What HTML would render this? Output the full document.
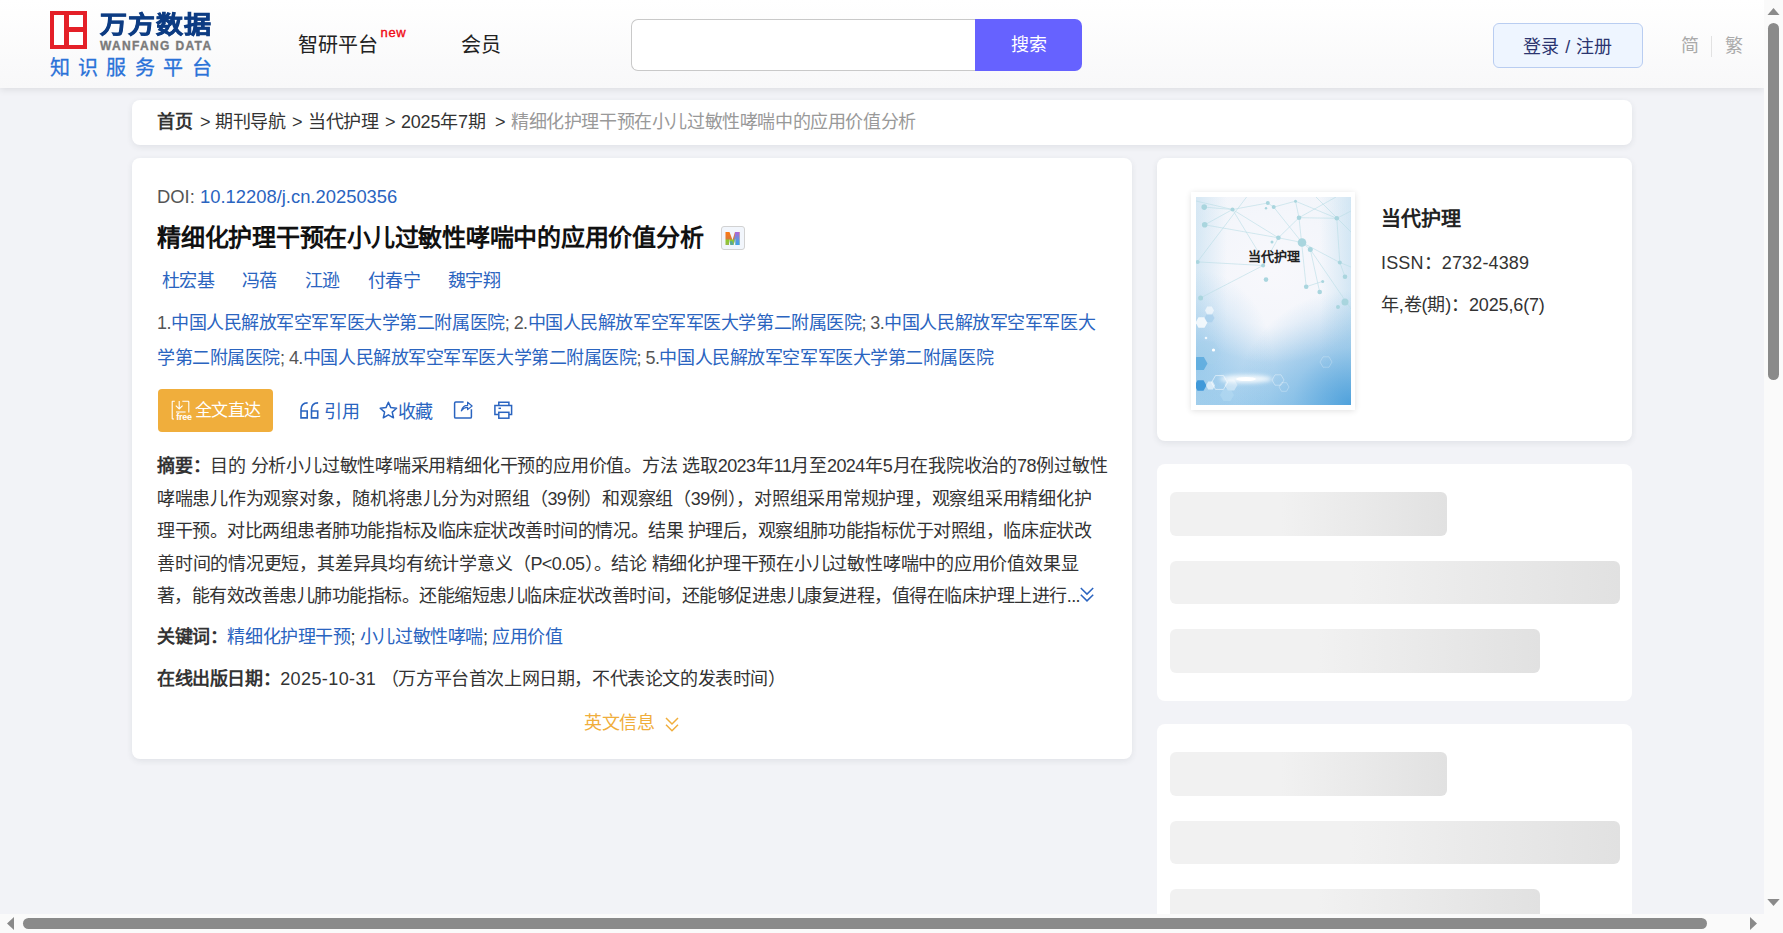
<!DOCTYPE html>
<html lang="zh-CN"><head><meta charset="utf-8"><title>万方数据</title>
<style>
*{margin:0;padding:0;box-sizing:border-box}
html,body{width:1783px;height:933px;overflow:hidden}
body{background:#f2f3f7;font-family:"Liberation Sans",sans-serif;color:#333;position:relative}
.abs{position:absolute}
.nw{white-space:nowrap}
#hdr{position:absolute;left:0;top:0;width:1764px;height:88px;background:linear-gradient(#ffffff,#f8f8f9);box-shadow:0 2px 7px rgba(0,0,0,.09)}
.card{position:absolute;background:#fff;border-radius:8px}
.shd{box-shadow:0 2px 6px rgba(40,50,70,.09)}
.blue{color:#2a64c0}
.t176{font-size:18px;letter-spacing:-0.4px}
.sk{position:absolute;border-radius:6px;background:linear-gradient(90deg,#f1f1f1 0%,#f1f1f1 40%,#e1e1e1 100%)}
svg{position:absolute;overflow:visible}
.jl{white-space:nowrap;text-align:justify;text-align-last:justify}
</style></head>
<body>
<div id="hdr">
  <div class="abs" style="left:50px;top:11px;width:37px;height:38px;border:4.5px solid #e42028;background:#fff"></div>
  <div class="abs" style="left:64px;top:11px;width:5px;height:38px;background:#e42028"></div>
  <div class="abs" style="left:64px;top:27px;width:23px;height:5px;background:#e42028"></div>
  <div class="abs nw jl" style="left:100px;top:7.5px;font-size:27px;line-height:32px;font-weight:900;color:#0d3c83;letter-spacing:1px;-webkit-text-stroke:0.8px #0d3c83;transform:scaleY(0.9);transform-origin:0 29px;width:112px">万方数据</div>
  <div class="abs nw" style="left:100px;top:38.5px;font-size:12px;line-height:15px;font-weight:bold;color:#7a7a7a;letter-spacing:1.35px;-webkit-text-stroke:0.35px #7a7a7a">WANFANG DATA</div>
  <div class="abs nw jl" style="left:49.5px;top:55px;font-size:20px;line-height:26px;color:#2a72d8;letter-spacing:8.45px;-webkit-text-stroke:0.3px #2a72d8;width:170.7px">知识服务平台</div>

  <div class="abs nw jl" style="left:298px;top:31px;font-size:20px;line-height:28px;color:#222;width:80px">智研平台</div>
  <div class="abs nw" style="left:380.5px;top:25px;font-size:13px;letter-spacing:0.7px;line-height:16px;color:#f00a14;-webkit-text-stroke:0.35px #f00a14">new</div>
  <div class="abs nw jl" style="left:461px;top:31px;font-size:20px;line-height:28px;color:#222;width:40px">会员</div>

  <div class="abs" style="left:631px;top:19px;width:346px;height:52px;border:1px solid #c9c9c9;border-right:none;border-radius:7px 0 0 7px;background:#fff"></div>
  <div class="abs nw" style="left:975px;top:19px;width:107px;height:52px;border-radius:0 7px 7px 0;background:#6662ff;color:#fff;font-size:18px;line-height:52px;text-align:center">搜索</div>

  <div class="abs nw" style="left:1493px;top:23px;width:150px;height:45px;border:1px solid #b9cdf1;border-radius:6px;background:#eef5ff;color:#2c3570;font-size:18px;letter-spacing:0.4px;line-height:47px;text-align:center">登录 / 注册</div>
  <div class="abs nw" style="left:1681px;top:34px;font-size:18px;line-height:24px;color:#aaa">简</div>
  <div class="abs" style="left:1711px;top:36px;width:1px;height:21px;background:#e2e2e2"></div>
  <div class="abs nw" style="left:1725px;top:34px;font-size:18px;line-height:24px;color:#aaa">繁</div>
</div>

<!-- breadcrumb -->
<div class="card shd" style="left:132px;top:100px;width:1500px;height:45px">
  <div class="abs nw t176 jl" style="left:25px;top:10px;line-height:25px;color:#333;font-weight:bold;width:35.2px">首页</div>
  <div class="abs nw t176" style="left:68px;top:10px;line-height:25px;color:#333">&gt;</div>
  <div class="abs nw t176 jl" style="left:83px;top:10px;line-height:25px;color:#333;width:70.4px">期刊导航</div>
  <div class="abs nw t176" style="left:160px;top:10px;line-height:25px;color:#333">&gt;</div>
  <div class="abs nw t176 jl" style="left:176px;top:10px;line-height:25px;color:#333;width:70.4px">当代护理</div>
  <div class="abs nw t176" style="left:253px;top:10px;line-height:25px;color:#333">&gt;</div>
  <div class="abs nw t176 jl" style="left:269px;top:10px;line-height:25px;color:#333;letter-spacing:-0.2px;width:84.7px">2025年7期</div>
  <div class="abs nw t176" style="left:363px;top:10px;line-height:25px;color:#333">&gt;</div>
  <div class="abs nw t176 jl" style="left:379px;top:10px;line-height:25px;color:#999;width:404.8px">精细化护理干预在小儿过敏性哮喘中的应用价值分析</div>
</div>

<!-- main card -->
<div class="card shd" style="left:132px;top:158px;width:1000px;height:601px">
  <div class="abs nw" style="left:25px;top:26px;font-size:18.4px;line-height:26px;color:#555">DOI: <span class="blue">10.12208/j.cn.20250356</span></div>
  <div class="abs nw jl" style="left:25px;top:64px;font-size:24px;letter-spacing:-0.25px;line-height:32px;font-weight:bold;color:#111;width:546.3px">精细化护理干预在小儿过敏性哮喘中的应用价值分析</div>
  <div class="abs" style="left:589px;top:68px;width:24px;height:24px;border:1.5px solid #d2d2d2;border-radius:3px;background:#f2f6fc"></div>
  <svg style="left:593px;top:74px" width="15" height="13" viewBox="0 0 15 13">
    <defs>
      <linearGradient id="mg1" x1="0" y1="0" x2="0" y2="1"><stop offset="0" stop-color="#ff7a10"/><stop offset="0.55" stop-color="#d9783a"/><stop offset="0.6" stop-color="#8ccc2a"/><stop offset="1" stop-color="#9ab84a"/></linearGradient>
      <linearGradient id="mg2" x1="0" y1="0" x2="0" y2="1"><stop offset="0" stop-color="#b063d6"/><stop offset="0.5" stop-color="#6a8fe0"/><stop offset="1" stop-color="#3aa0ea"/></linearGradient>
    </defs>
    <path d="M0.5 0 H4.5 L7.5 8 L10 0 H14.5 V13 H10.5 V6 L8.5 13 H5.5 L4 7 V13 H0.5 Z" fill="url(#mg1)"/>
    <path d="M10 0 H14.5 V13 H10.5 V6 L8.8 12 Z" fill="url(#mg2)"/>
    <path d="M5.5 13 L4.6 9.5 L7.2 9 L8.6 13 Z" fill="#5aa898"/>
  </svg>

  <div class="abs nw t176 blue jl" style="left:29.5px;top:110px;line-height:26px;width:52.8px">杜宏基</div>
  <div class="abs nw t176 blue jl" style="left:109.5px;top:110px;line-height:26px;width:35.2px">冯蓓</div>
  <div class="abs nw t176 blue jl" style="left:172.5px;top:110px;line-height:26px;width:35.2px">江逊</div>
  <div class="abs nw t176 blue jl" style="left:235.5px;top:110px;line-height:26px;width:52.8px">付春宁</div>
  <div class="abs nw t176 blue jl" style="left:315.5px;top:110px;line-height:26px;width:52.8px">魏宇翔</div>

  <div class="abs" style="left:25px;top:148px;line-height:35px;color:#555;font-size:18px;letter-spacing:-0.6px">
    <div class="jl" style="width:938px">1.<span class="blue">中国人民解放军空军军医大学第二附属医院</span>; 2.<span class="blue">中国人民解放军空军军医大学第二附属医院</span>; 3.<span class="blue">中国人民解放军空军军医大</span></div>
    <div class="jl" style="width:836px"><span class="blue">学第二附属医院</span>; 4.<span class="blue">中国人民解放军空军军医大学第二附属医院</span>; 5.<span class="blue">中国人民解放军空军军医大学第二附属医院</span></div>
  </div>

  <div class="abs" style="left:26px;top:231px;width:115px;height:43px;border-radius:4px;background:#f0ae3c"></div>
  <svg style="left:38.6px;top:241.6px" width="24" height="22" viewBox="0 0 24 22">
    <path d="M3.8 1.3 H1.6 Q1.2 1.3 1.2 1.7 V18.6 Q1.2 19 1.6 19 H3" fill="none" stroke="#fff" stroke-width="1.1"/>
    <path d="M11.3 1.3 H17.4 Q17.8 1.3 17.8 1.7 V12.5" fill="none" stroke="#fff" stroke-width="1.1"/>
    <path d="M8.2 1 V9 M4.8 5.6 L8.2 9 L11.6 5.6" fill="none" stroke="#fff" stroke-width="1.1"/>
    <path d="M5 12 H14.6" fill="none" stroke="#fff" stroke-width="1.1"/>
    <text x="5.3" y="20.2" font-family="Liberation Sans" font-size="9" font-weight="bold" fill="#fff" letter-spacing="-0.3">free</text>
  </svg>
  <div class="abs nw jl" style="left:62.5px;top:240px;font-size:17px;letter-spacing:-0.5px;line-height:26px;color:#fff;width:66px">全文直达</div>

  <svg style="left:167px;top:243px" width="20" height="18" viewBox="0 0 20 18">
    <path d="M8.6 1.9 Q2 1.9 2 8.6 V16.9 H8.2 V10 H2" fill="none" stroke="#2a64c0" stroke-width="1.6"/>
    <path d="M19.1 1.9 Q12.5 1.9 12.5 8.6 V16.9 H18.7 V10 H12.5" fill="none" stroke="#2a64c0" stroke-width="1.6"/>
  </svg>
  <div class="abs nw t176 blue jl" style="left:192px;top:240.5px;line-height:26px;width:35.2px">引用</div>

  <svg style="left:246.8px;top:243px" width="20" height="19" viewBox="0 0 20 19">
    <path d="M9.4 1.2 L11.8 6.6 L17.6 7.2 L13.2 11.1 L14.5 16.8 L9.4 13.8 L4.3 16.8 L5.6 11.1 L1.2 7.2 L7 6.6 Z" fill="none" stroke="#2a64c0" stroke-width="1.5" stroke-linejoin="round"/>
  </svg>
  <div class="abs nw t176 blue jl" style="left:265.5px;top:240.5px;line-height:26px;width:35.2px">收藏</div>

  <svg style="left:321px;top:243.2px" width="20" height="18" viewBox="0 0 20 18">
    <path d="M10.6 1.1 H2.8 Q1.6 1.1 1.6 2.3 V15.9 Q1.6 17.1 2.8 17.1 H17.2 Q18.4 17.1 18.4 15.9 V8.2" fill="none" stroke="#2a64c0" stroke-width="1.5"/>
    <path d="M8.3 9.8 Q10 4.2 14.6 4.4 V1.2 L19.1 5 L14.6 8.6 V6.3 Q11 6.1 8.3 9.8 Z" fill="none" stroke="#2a64c0" stroke-width="1.2" stroke-linejoin="round"/>
  </svg>

  <svg style="left:361px;top:243.2px" width="20" height="18" viewBox="0 0 20 18">
    <path d="M5.8 4.7 V1.3 H15.9 V4.7" fill="none" stroke="#2a64c0" stroke-width="1.5"/>
    <path d="M5.2 13.4 H1.9 V4.6 H18.6 V13.4 H15.9" fill="none" stroke="#2a64c0" stroke-width="1.5"/>
    <rect x="5.8" y="11.3" width="10.1" height="5.9" fill="none" stroke="#2a64c0" stroke-width="1.5"/>
    <path d="M5.5 7.3 H8" stroke="#2a64c0" stroke-width="1.5"/>
  </svg>

  <div class="abs" style="left:25px;top:292px;line-height:32.5px;color:#333;font-size:18px;letter-spacing:-0.6px">
    <div class="jl" style="width:950px"><b>摘要：</b>目的 分析小儿过敏性哮喘采用精细化干预的应用价值。方法 选取2023年11月至2024年5月在我院收治的78例过敏性</div>
    <div class="jl" style="width:934px">哮喘患儿作为观察对象，随机将患儿分为对照组（39例）和观察组（39例），对照组采用常规护理，观察组采用精细化护</div>
    <div class="jl" style="width:934px">理干预。对比两组患者肺功能指标及临床症状改善时间的情况。结果 护理后，观察组肺功能指标优于对照组，临床症状改</div>
    <div class="jl" style="width:921px">善时间的情况更短，其差异具均有统计学意义（P&lt;0.05）。结论 精细化护理干预在小儿过敏性哮喘中的应用价值效果显</div>
    <div class="jl" style="width:923px">著，能有效改善患儿肺功能指标。还能缩短患儿临床症状改善时间，还能够促进患儿康复进程，值得在临床护理上进行...</div>
  </div>
  <svg style="left:948px;top:429px" width="15" height="15" viewBox="0 0 15 15">
    <path d="M0.8 1 L7 7.1 L13.2 1 M0.8 7.8 L7 13.9 L13.2 7.8" fill="none" stroke="#2a64c0" stroke-width="1.5"/>
  </svg>

  <div class="abs nw t176 jl" style="left:25px;top:465.5px;line-height:26px;color:#333;width:405.6px"><b>关键词：</b><span class="blue">精细化护理干预</span>; <span class="blue">小儿过敏性哮喘</span>; <span class="blue">应用价值</span></div>
  <div class="abs jl" style="left:25px;top:507.5px;width:618px;font-size:18px;letter-spacing:-0.4px;line-height:26px;color:#333"><b>在线出版日期：</b><span style="letter-spacing:0.4px">2025-10-31</span> （万方平台首次上网日期，不代表论文的发表时间）</div>
  <div class="abs nw t176 jl" style="left:452px;top:551.5px;line-height:26px;color:#f0ae3c;width:70.4px">英文信息</div>
  <svg style="left:533px;top:559px" width="15" height="15" viewBox="0 0 15 15">
    <path d="M1 1 L7 7 L13 1 M1 7.8 L7 13.8 L13 7.8" fill="none" stroke="#f0ae3c" stroke-width="1.5"/>
  </svg>
</div>

<!-- right card 1 -->
<div class="card shd" style="left:1157px;top:158px;width:475px;height:283px">
  <div class="abs" style="left:34px;top:34px;width:164px;height:218px;background:#fff;box-shadow:0 1px 6px rgba(0,0,0,.12)"></div>
  <div class="abs" style="left:39px;top:39px;width:155px;height:208px;overflow:hidden;background:radial-gradient(ellipse 75% 55% at 100% 100%,rgba(62,152,216,0.85) 0%,rgba(62,152,216,0.3) 50%,rgba(62,152,216,0) 100%),radial-gradient(ellipse 50% 45% at 0% 80%,rgba(120,185,230,0.5) 0%,rgba(120,185,230,0) 100%),linear-gradient(90deg,rgba(185,218,238,0.5) 0%,rgba(185,218,238,0) 20%,rgba(185,218,238,0) 80%,rgba(185,218,238,0.55) 100%),radial-gradient(ellipse 70% 45% at 50% 35%,#f8f8fc 0%,#f4f6fb 60%,rgba(244,246,251,0) 100%),linear-gradient(180deg,#f2f5fa 0%,#eef3f9 45%,#dde9f5 62%,#c4def2 80%,#a9d2ee 100%)">
    <svg style="left:0;top:0" width="155" height="208" viewBox="0 0 155 208">
      <g stroke="#b9dde5" stroke-width="0.7" fill="none" opacity="0.85">
        <path d="M0 4 L36.5 12.5 L71.8 6 L77.7 10.1 L99.5 4.2 L140.8 21.3 L155 14"/>
        <path d="M8.2 10.1 L36.5 12.5 L82.4 40.8 L106 45.5 L143.8 65.5 L155 70"/>
        <path d="M36.5 12.5 L8.7 27.8 L82.4 40.8"/>
        <path d="M36.5 12.5 L64.8 59"/>
        <path d="M77.7 10.1 L106 45.5 L114.3 52.5 L155 112"/>
        <path d="M140 0 L103 20.7 L82.4 40.8 L67.1 68.5 L4.6 100.9"/>
        <path d="M99.5 4.2 L103 20.7 L140.8 21.3 M103 20.7 L110.2 89.7 L126.7 84.4"/>
        <path d="M1.7 64.9 L67.1 68.5"/>
        <path d="M2.3 63.7 L50.6 0"/>
        <path d="M114.3 52.5 L123.7 95 M140.8 21.3 L143.8 65.5 L149 79.7"/>
        <path d="M120 0 L155 35"/>
      </g>
      <g fill="#a9d5de">
        <circle cx="8.2" cy="10.1" r="2.8"/><circle cx="8.7" cy="27.8" r="2.8"/><circle cx="36.5" cy="12.5" r="2"/>
        <circle cx="71.8" cy="6" r="2"/><circle cx="77.7" cy="10.1" r="2"/><circle cx="70" cy="11.3" r="1.2"/>
        <circle cx="99.5" cy="4.2" r="1.5"/><circle cx="103" cy="20.7" r="2.3"/><circle cx="140.8" cy="21.3" r="2.3"/>
        <circle cx="82.4" cy="40.8" r="2.3"/><circle cx="76" cy="44.9" r="1.5"/><circle cx="106" cy="45.5" r="4.3"/>
        <circle cx="114.3" cy="52.5" r="2.5"/><circle cx="143.8" cy="65.5" r="2"/><circle cx="67.1" cy="68.5" r="2"/>
        <circle cx="70" cy="82.6" r="2.3"/><circle cx="1.7" cy="64.9" r="2"/><circle cx="110.2" cy="89.7" r="2.3"/>
        <circle cx="126.7" cy="84.4" r="1.5"/><circle cx="123.7" cy="95" r="2.3"/><circle cx="149" cy="79.7" r="2.3"/>
        <circle cx="4.6" cy="100.9" r="2.5"/><circle cx="149" cy="105" r="3.5"/><circle cx="142" cy="110" r="2"/>
      </g>
      <g>
        <path d="M25.0 156.0 L18.5 167.3 L5.5 167.3 L-1.0 156.0 L5.5 144.7 L18.5 144.7 Z" fill="#a8d0ec" opacity="0.35"/>
        <path d="M11.5 166.5 L7.8 173.0 L0.3 173.0 L-3.5 166.5 L0.2 160.0 L7.8 160.0 Z" fill="#4aa3dc" opacity="0.7"/>
        <path d="M10.5 188.5 L7.5 193.7 L1.5 193.7 L-1.5 188.5 L1.5 183.3 L7.5 183.3 Z" fill="#2f8fd6" opacity="0.85"/>
        <path d="M11.5 125.5 L8.5 130.7 L2.5 130.7 L-0.5 125.5 L2.5 120.3 L8.5 120.3 Z" fill="#ffffff" opacity="0.8"/>
        <path d="M18.5 121.0 L16.0 125.3 L11.0 125.3 L8.5 121.0 L11.0 116.7 L16.0 116.7 Z" fill="#9cc9ea" opacity="0.55"/>
        <path d="M18.0 113.5 L15.8 117.4 L11.2 117.4 L9.0 113.5 L11.2 109.6 L15.8 109.6 Z" fill="#ffffff" opacity="0.6"/>
        <path d="M19.0 188.5 L16.8 192.4 L12.2 192.4 L10.0 188.5 L12.2 184.6 L16.8 184.6 Z" fill="#ffffff" opacity="0.6"/>
        <path d="M31.5 185.5 L27.5 192.4 L19.5 192.4 L15.5 185.5 L19.5 178.6 L27.5 178.6 Z" fill="none" stroke="#ffffff" stroke-width="0.8" opacity="0.7"/>
        <path d="M41.5 188.0 L38.2 193.6 L31.8 193.6 L28.5 188.0 L31.7 182.4 L38.2 182.4 Z" fill="#ffffff" opacity="0.4"/>
        <path d="M38.0 198.0 L34.5 204.1 L27.5 204.1 L24.0 198.0 L27.5 191.9 L34.5 191.9 Z" fill="#bfe0f5" opacity="0.4"/>
        <path d="M88.0 183.0 L85.0 188.2 L79.0 188.2 L76.0 183.0 L79.0 177.8 L85.0 177.8 Z" fill="none" stroke="#ffffff" stroke-width="0.8" opacity="0.45"/>
        <path d="M93.0 190.0 L90.5 194.3 L85.5 194.3 L83.0 190.0 L85.5 185.7 L90.5 185.7 Z" fill="none" stroke="#ffffff" stroke-width="0.8" opacity="0.35"/>
        <path d="M136.0 165.0 L133.0 170.2 L127.0 170.2 L124.0 165.0 L127.0 159.8 L133.0 159.8 Z" fill="none" stroke="#ffffff" stroke-width="0.8" opacity="0.3"/>
        <circle cx="17.5" cy="153" r="1.6" fill="#fff"/>
        <circle cx="10" cy="141" r="1.3" fill="#fff" opacity="0.8"/>
        </g>
      <ellipse cx="50" cy="182" rx="26" ry="4" fill="#ffffff" opacity="0.85" style="filter:blur(2px)"/>
      <ellipse cx="50" cy="182" rx="10" ry="2" fill="#ffffff"/>
    </svg>
  </div>
  <div class="abs nw jl" style="left:91px;top:90px;font-size:13px;line-height:18px;font-weight:bold;color:#222;width:52px">当代护理</div>
  <div class="abs nw jl" style="left:224px;top:47px;font-size:20px;line-height:28px;font-weight:bold;color:#222;width:80px">当代护理</div>
  <div class="abs nw jl" style="left:224px;top:92px;font-size:18px;letter-spacing:0.15px;line-height:26px;color:#333;width:146.5px">ISSN：2732-4389</div>
  <div class="abs nw jl" style="left:224px;top:134px;font-size:18px;letter-spacing:-0.15px;line-height:26px;color:#333;width:163.7px">年,卷(期)：2025,6(7)</div>
</div>

<!-- right card 2 -->
<div class="card" style="left:1157px;top:464px;width:475px;height:237px">
  <div class="sk" style="left:13px;top:28px;width:277px;height:44px"></div>
  <div class="sk" style="left:13px;top:97px;width:450px;height:43px"></div>
  <div class="sk" style="left:13px;top:165px;width:370px;height:44px"></div>
</div>
<!-- right card 3 -->
<div class="card" style="left:1157px;top:724px;width:475px;height:260px">
  <div class="sk" style="left:13px;top:28px;width:277px;height:44px"></div>
  <div class="sk" style="left:13px;top:97px;width:450px;height:43px"></div>
  <div class="sk" style="left:13px;top:165px;width:370px;height:44px"></div>
</div>

<!-- scrollbars -->
<div class="abs" style="left:1764px;top:0;width:19px;height:933px;background:#fafafa"></div>
<div class="abs" style="left:1768px;top:23px;width:11px;height:357px;border-radius:6px;background:#8a8a8a"></div>
<svg style="left:1764px;top:0" width="19" height="19" viewBox="0 0 19 19"><path d="M3.5 15 L9.5 8 L15.5 15 Z" fill="#8a8a8a"/></svg>
<svg style="left:1764px;top:895px" width="19" height="19" viewBox="0 0 19 19"><path d="M3.3 4 L9.5 11 L15.7 4 Z" fill="#8a8a8a"/></svg>
<div class="abs" style="left:0;top:914px;width:1764px;height:19px;background:#fafafa"></div>
<div class="abs" style="left:23px;top:918px;width:1684px;height:11px;border-radius:6px;background:#8a8a8a"></div>
<svg style="left:0;top:914px" width="19" height="19" viewBox="0 0 19 19"><path d="M14 3 L7 9.5 L14 16 Z" fill="#8a8a8a"/></svg>
<svg style="left:1745px;top:914px" width="19" height="19" viewBox="0 0 19 19"><path d="M5 3 L12 9.5 L5 16 Z" fill="#8a8a8a"/></svg>
</body></html>
